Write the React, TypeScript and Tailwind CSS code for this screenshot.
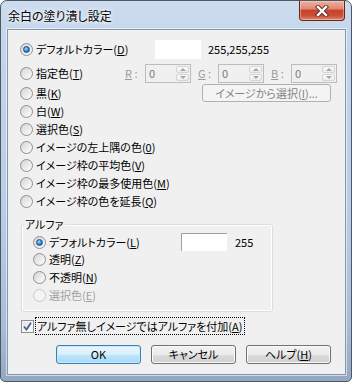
import type { ReactNode } from "react";

const font = "font-['Noto_Sans_CJK_JP','Noto_Sans',sans-serif] [font-feature-settings:'palt']";

function Radio({ checked = false, disabled = false }: { checked?: boolean; disabled?: boolean }) {
  return (
    <span
      className={`flex h-[13px] w-[13px] shrink-0 items-center justify-center rounded-full border ${
        disabled
          ? "border-[#c9c9c9] bg-[#f4f4f4]"
          : "border-[#8e8f8f] bg-[linear-gradient(135deg,#d4d4d4_0%,#ececec_55%,#ffffff_100%)]"
      }`}
    >
      {checked ? (
        <span className="h-[7px] w-[7px] rounded-full border border-[#1b4f8c] bg-[radial-gradient(circle_at_40%_35%,#b6e1fa_0%,#3a90d6_45%,#0d4d98_100%)]" />
      ) : null}
    </span>
  );
}

function U({ children }: { children: ReactNode }) {
  return <span className="underline underline-offset-[1px]">{children}</span>;
}

function Option({
  checked,
  disabled,
  children,
}: {
  checked?: boolean;
  disabled?: boolean;
  children: ReactNode;
}) {
  return (
    <span className="flex items-center gap-[3px]">
      <Radio checked={checked} disabled={disabled} />
      <span className={`whitespace-nowrap ${disabled ? "text-[#a0a0a0]" : "text-black"}`}>{children}</span>
    </span>
  );
}

function SpinField({ letter }: { letter: string }) {
  return (
    <div className="ml-[7px] flex items-center first:ml-0">
      <span className="w-[20px] whitespace-nowrap text-[#9a9a9a]">
        <U>{letter}</U> :
      </span>
      <div className="flex h-[19px] w-[46px] items-stretch border border-[#b9bcc0] bg-[#f0f0f0]">
        <span className="flex-1 pl-[3px] leading-[17px] text-[#7a7a7a]">0</span>
        <div className="flex w-[15px] flex-col gap-px p-px">
          <span className="flex flex-1 items-center justify-center rounded-[2px] border border-[#d2d4d6] bg-[linear-gradient(180deg,#fafafa,#ececec)]">
            <span className="h-0 w-0 border-x-[3px] border-b-[3px] border-x-transparent border-b-[#a6a6a6]" />
          </span>
          <span className="flex flex-1 items-center justify-center rounded-[2px] border border-[#d2d4d6] bg-[linear-gradient(180deg,#fafafa,#ececec)]">
            <span className="h-0 w-0 border-x-[3px] border-t-[3px] border-x-transparent border-t-[#a6a6a6]" />
          </span>
        </div>
      </div>
    </div>
  );
}

function PushButton({ children, primary = false }: { children: ReactNode; primary?: boolean }) {
  return (
    <button
      className={`flex h-[19px] w-[85px] items-center justify-center rounded-[3px] border text-black ${
        primary
          ? "border-[#3c7fb1] bg-[linear-gradient(180deg,#eaf6fd_0%,#d9f0fc_50%,#bee6fd_51%,#a7d9f5_100%)] [box-shadow:inset_0_0_0_1px_#c4ecff]"
          : "border-[#707070] bg-[linear-gradient(180deg,#f2f2f2_0%,#ebebeb_50%,#dddddd_51%,#cfcfcf_100%)] [box-shadow:inset_0_0_0_1px_#fbfbfb]"
      }`}
    >
      {children}
    </button>
  );
}

export default function App() {
  return (
    <div className={`h-[382px] w-[352px] bg-white text-[11px] leading-none ${font}`}>
      <div className="relative flex h-full w-full flex-col rounded-t-[7px] rounded-b-[5px] border border-[#4d5866] bg-[linear-gradient(180deg,#cddcee_0%,#c2d5eb_12%,#b9cde6_55%,#a9bdd6_85%,#94a8c1_100%)] pt-[28px] pr-[5px] pb-[6px] pl-[6px]">
        <div className="absolute top-[8px] left-[7px] text-[12px] leading-[14px] text-black [text-shadow:0_0_5px_#ffffff,0_0_3px_#ffffff]">
          余白の塗り潰し設定
        </div>
        <div className="absolute top-0 right-[6px] flex h-[20px] w-[46px] items-center justify-center rounded-b-[4px] border border-t-0 border-[#6b2419] bg-[linear-gradient(180deg,#eeb1a1_0%,#de8a72_40%,#c8432b_50%,#cc4f36_78%,#e08d73_100%)] [box-shadow:inset_0_0_0_1px_rgba(255,220,210,0.45)]">
          <svg width="14" height="12" viewBox="0 0 14 12">
            <path d="M3 2 L11 10 M11 2 L3 10" stroke="#5a2a24" strokeWidth="4.2" strokeLinecap="square" />
            <path d="M3 2 L11 10 M11 2 L3 10" stroke="#ffffff" strokeWidth="2.4" strokeLinecap="square" />
          </svg>
        </div>

        <div className="flex flex-1 flex-col border border-[#8497ad] bg-[#f0f0f0] [box-shadow:0_0_0_1px_rgba(255,255,255,0.55)]">
          {/* デフォルトカラー */}
          <div className="mt-[9px] flex h-[20px] items-center pl-[12px]">
            <div className="w-[135px]">
              <Option checked>
                デフォルトカラー(<U>D</U>)
              </Option>
            </div>
            <div className="h-[19px] w-[46px] bg-white" />
            <span className="ml-[7px] text-black">255,255,255</span>
          </div>

          {/* 指定色 */}
          <div className="mt-[4px] flex h-[20px] items-center pl-[12px]">
            <div className="w-[98px]">
              <Option>
                指定色(<U>T</U>)
              </Option>
            </div>
            <SpinField letter="R" />
            <SpinField letter="G" />
            <SpinField letter="B" />
          </div>

          <div className="mt-px flex h-[18px] items-center pl-[12px]">
            <div className="w-[182px]">
              <Option>
                黒(<U>K</U>)
              </Option>
            </div>
            <button className="flex h-[18px] w-[129px] items-center justify-center rounded-[3px] border border-[#adb2b5] bg-[#f4f4f4] text-[#838383]">
              イメージから選択(<U>I</U>)...
            </button>
          </div>

          <div className="flex flex-col pl-[12px]">
            <div className="flex h-[18px] items-center">
              <Option>
                白(<U>W</U>)
              </Option>
            </div>
            <div className="flex h-[18px] items-center">
              <Option>
                選択色(<U>S</U>)
              </Option>
            </div>
            <div className="flex h-[18px] items-center">
              <Option>
                イメージの左上隅の色(<U>0</U>)
              </Option>
            </div>
            <div className="flex h-[18px] items-center">
              <Option>
                イメージ枠の平均色(<U>V</U>)
              </Option>
            </div>
            <div className="flex h-[18px] items-center">
              <Option>
                イメージ枠の最多使用色(<U>M</U>)
              </Option>
            </div>
            <div className="flex h-[18px] items-center">
              <Option>
                イメージ枠の色を延長(<U>Q</U>)
              </Option>
            </div>
          </div>

          {/* アルファ */}
          <div className="relative mt-[14px] ml-[13px] h-[88px] w-[252px] rounded-[3px] border border-[#d5dfe5] [box-shadow:inset_0_0_0_1px_#ffffff] pt-[9px] pl-[11px]">
            <span className="absolute -top-[8px] left-[2px] bg-[#f0f0f0] px-px leading-[14px] text-black">アルファ</span>
            <div className="flex h-[16px] items-center">
              <div className="w-[148px]">
                <Option checked>
                  デフォルトカラー(<U>L</U>)
                </Option>
              </div>
              <div className="h-[18px] w-[46px] shrink-0 border-t border-l border-[#a0a0a0] bg-white" />
              <span className="ml-[8px] text-black">255</span>
            </div>
            <div className="flex h-[18px] items-center">
              <Option>
                透明(<U>Z</U>)
              </Option>
            </div>
            <div className="flex h-[18px] items-center">
              <Option>
                不透明(<U>N</U>)
              </Option>
            </div>
            <div className="flex h-[18px] items-center">
              <Option disabled>
                選択色(<U>E</U>)
              </Option>
            </div>
          </div>

          {/* checkbox */}
          <div className="mt-[5px] ml-[13px] flex h-[18px] items-center gap-px">
            <span className="flex h-[13px] w-[13px] items-center justify-center border border-[#8e8f8f] bg-[linear-gradient(135deg,#dcdcdc_0%,#f4f4f4_60%,#ffffff_100%)] [box-shadow:inset_0_0_0_1px_#f6f6f6]">
              <svg width="9" height="9" viewBox="0 0 9 9">
                <path d="M1 4.5 L3.5 7.5 L8 0.8" fill="none" stroke="#4a5e94" strokeWidth="1.8" />
              </svg>
            </span>
            <span className="flex h-[18px] items-center border border-dotted border-black px-px whitespace-nowrap text-black">
              アルファ無しイメージではアルファを付加(<U>A</U>)
            </span>
          </div>

          <div className="mt-[10px] ml-[48px] flex gap-[10px]">
            <PushButton primary>OK</PushButton>
            <PushButton>キャンセル</PushButton>
            <PushButton>
              ヘルプ(<U>H</U>)
            </PushButton>
          </div>
        </div>
      </div>
    </div>
  );
}
